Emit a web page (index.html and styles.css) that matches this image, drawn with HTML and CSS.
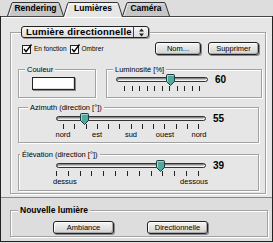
FILE: index.html
```html
<!DOCTYPE html>
<html>
<head>
<meta charset="utf-8">
<link rel="stylesheet" href="styles.css">
</head>
<body>
<div class="tabs">
  <div class="tab tab-rendering">
    <svg class="tab-shape" width="57" height="17" viewBox="0 0 57 17"><path class="tab-fill" d="M0.5 16 L4.8 3.2 Q5.1 2.5 6 2.5 L51 2.5 Q51.9 2.5 52.2 3.2 L56.5 16"/><path class="tab-hi" d="M2 16 L6 4 L51 4"/></svg>
    <span class="tab-label">Rendering</span>
  </div>
  <div class="tab tab-lumieres active">
    <svg class="tab-shape" width="60" height="17" viewBox="0 0 60 17"><path class="tab-fill" d="M0.5 17 L4.8 3.2 Q5.1 2.5 6 2.5 L54 2.5 Q54.9 2.5 55.2 3.2 L59.5 17"/><path class="tab-hi" d="M2 17 L6 4 L54 4"/></svg>
    <span class="tab-label">Lumières</span>
  </div>
  <div class="tab tab-camera">
    <svg class="tab-shape" width="48" height="17" viewBox="0 0 48 17"><path class="tab-fill" d="M0.5 16 L4.8 3.2 Q5.1 2.5 6 2.5 L42 2.5 Q42.9 2.5 43.2 3.2 L47.5 16"/><path class="tab-hi" d="M2 16 L6 4 L42 4"/></svg>
    <span class="tab-label">Caméra</span>
  </div>
</div>

<div class="frame">
  <div class="panel">
    <fieldset class="group group-main">
      <legend class="popup">
        <span class="popup-label">Lumière directionnelle</span>
        <span class="popup-arrow"><svg width="5" height="9" viewBox="0 0 5 9"><path d="M0 3.5 L2.5 0.5 L5 3.5 Z M0 5.5 L2.5 8.5 L5 5.5 Z"/></svg></span>
      </legend>

      <div class="row-top">
        <label class="check check-1"><svg class="check-box" width="12" height="10" viewBox="0 0 12 10"><rect x="0.5" y="1.5" width="8" height="8"/><path d="M2 5 L4 7.6 L9.5 0.5"/></svg><span>En fonction</span></label>
        <label class="check check-2"><svg class="check-box" width="12" height="10" viewBox="0 0 12 10"><rect x="0.5" y="1.5" width="8" height="8"/><path d="M2 5 L4 7.6 L9.5 0.5"/></svg><span>Ombrer</span></label>
        <button class="btn btn-nom">Nom...</button>
        <button class="btn btn-supprimer">Supprimer</button>
      </div>

      <div class="row-mid">
        <fieldset class="group group-couleur">
          <legend class="small-legend">Couleur</legend>
          <div class="swatch"></div>
        </fieldset>
        <fieldset class="group group-lum">
          <legend class="small-legend">Luminosité [%]</legend>
          <div class="slider slider-lum">
            <div class="track-row">
              <div class="track"><svg class="thumb" style="left:48px" width="11" height="12" viewBox="0 0 11 12"><path d="M1.5 1.5 Q1.5 0.5 2.5 0.5 L8.5 0.5 Q9.5 0.5 9.5 1.5 L9.5 7.5 L5.5 11.5 L1.5 7.5 Z"/><path class="thumb-hi" d="M2.5 7.5 L2.5 1.5 L8.5 1.5"/></svg></div>
              <span class="value">60</span>
            </div>
            <div class="ticks ticks-lum"><i></i><i></i><i></i><i></i><i></i><i></i><i></i><i></i><i></i><i></i><i></i></div>
          </div>
        </fieldset>
      </div>

      <fieldset class="group group-az">
        <legend class="small-legend">Azimuth (direction [°])</legend>
        <div class="slider slider-wide">
          <div class="track-row">
            <div class="track"><svg class="thumb" style="left:22px" width="11" height="12" viewBox="0 0 11 12"><path d="M1.5 1.5 Q1.5 0.5 2.5 0.5 L8.5 0.5 Q9.5 0.5 9.5 1.5 L9.5 7.5 L5.5 11.5 L1.5 7.5 Z"/><path class="thumb-hi" d="M2.5 7.5 L2.5 1.5 L8.5 1.5"/></svg></div>
            <span class="value">55</span>
          </div>
          <div class="ticks ticks-az"><i></i><i></i><i></i><i></i><i></i><i></i><i></i><i></i><i></i><i></i><i></i><i></i><i></i></div>
          <div class="tick-labels labels-az"><span>nord</span><span>est</span><span>sud</span><span>ouest</span><span>nord</span></div>
        </div>
      </fieldset>

      <fieldset class="group group-el">
        <legend class="small-legend">Élévation (direction [°])</legend>
        <div class="slider slider-wide">
          <div class="track-row">
            <div class="track"><svg class="thumb" style="left:98px" width="11" height="12" viewBox="0 0 11 12"><path d="M1.5 1.5 Q1.5 0.5 2.5 0.5 L8.5 0.5 Q9.5 0.5 9.5 1.5 L9.5 7.5 L5.5 11.5 L1.5 7.5 Z"/><path class="thumb-hi" d="M2.5 7.5 L2.5 1.5 L8.5 1.5"/></svg></div>
            <span class="value">39</span>
          </div>
          <div class="ticks ticks-el"><i></i><i></i><i></i><i></i><i></i><i></i><i></i><i></i><i></i><i></i><i></i><i></i><i></i></div>
          <div class="tick-labels labels-el"><span>dessus</span><span>dessous</span></div>
        </div>
      </fieldset>
    </fieldset>
  </div>

  <div class="lower">
    <fieldset class="group group-new">
      <legend class="bold-legend">Nouvelle lumière</legend>
      <div class="row-new">
        <button class="btn btn-wide">Ambiance</button>
        <button class="btn btn-wide">Directionnelle</button>
      </div>
    </fieldset>
  </div>
</div>
</body>
</html>
```

FILE: styles.css
```css
* { box-sizing: border-box; }
html, body { margin: 0; padding: 0; }
body {
  width: 273px;
  height: 243px;
  overflow: hidden;
  background: #dddddd;
  font-family: "Liberation Sans", Arial, sans-serif;
  color: #000;
}

/* ---------- tabs ---------- */
.tabs {
  display: flex;
  height: 17px;
  margin-bottom: -1px;
  padding-left: 7px;
  position: relative;
  z-index: 1;
}
.tab {
  position: relative;
  z-index: 0;
  height: 17px;
  margin-right: -1px;
  display: flex;
  justify-content: center;
  padding-top: 4px;
  font-weight: bold;
  font-size: 8.5px;
  line-height: 9px;
}
.tab.active { z-index: 2; }
.tab-rendering { width: 57px; }
.tab-lumieres { width: 60px; }
.tab-camera { width: 48px; }
.tab-shape { position: absolute; left: 0; top: 0; z-index: -1; }
.tab-fill { fill: #c6c6c6; stroke: #333; stroke-width: 1; }
.tab-hi { fill: none; stroke: #e6e6e6; stroke-width: 1; }
.active .tab-fill { fill: #e6e6e6; }
.active .tab-hi { stroke: #fff; }

/* ---------- frame & panel ---------- */
.frame {
  height: 226px;
  border: 1px solid #222;
  border-top: none;
}
.panel {
  height: 182px;
  border-top: 1px solid #444;
  border-bottom: 1px solid #888;
  background: #e6e6e6;
  padding: 9px 0 0 9px;
  box-shadow: inset 0 1px 0 #fff;
}

/* ---------- group boxes ---------- */
.group {
  margin: 0;
  padding: 0;
  min-width: 0;
  border: 1px solid #a2a2a2;
  box-shadow: inset 1px 1px 0 #fff, 1px 1px 0 #fff;
}
.small-legend {
  padding: 0 2px;
  font-size: 7.5px;
  line-height: 9px;
  background: #e6e6e6;
}
.group-main { width: 256px; height: 168px; }

/* popup */
.popup {
  margin-left: 10px;
  padding: 0;
  width: 128px;
  height: 12px;
  display: flex;
  border: 1px solid #222;
  border-radius: 3px;
  background: linear-gradient(#f6f6f6, #dcdcdc);
  box-shadow: 1px 1px 0 #9a9a9a;
}
.popup-label {
  flex: 1;
  padding-left: 4px;
  font-weight: bold;
  font-size: 9.5px;
  letter-spacing: 0.2px;
  line-height: 10px;
  white-space: nowrap;
  overflow: hidden;
}
.popup-arrow {
  width: 15px;
  flex: none;
  border-left: 1px solid #444;
  display: flex;
  align-items: center;
  justify-content: center;
}
.popup-arrow svg { fill: #222; }

/* top row */
.row-top {
  margin-top: 4px;
  height: 13px;
  display: flex;
  align-items: center;
}
.check {
  display: flex;
  align-items: center;
  font-size: 6.5px;
  line-height: 8px;
}
.check-1 { margin-left: 11px; }
.check-2 { margin-left: 3px; }
.check-box { margin-right: 0; overflow: visible; }
.check-box rect { fill: #fff; stroke: #222; }
.check-box path { fill: none; stroke: #000; stroke-width: 1.4; }

.btn {
  height: 13px;
  padding: 0;
  border: 1px solid #222;
  border-radius: 3px;
  background: linear-gradient(#f4f4f4, #d2d2d2);
  box-shadow: inset 1px 1px 0 #fff, inset -1px -1px 0 #a8a8a8, 1px 1px 0 #8a8a8a;
  font-family: "Liberation Sans", Arial, sans-serif;
  font-size: 7.5px;
  line-height: 11px;
  color: #000;
}
.btn-nom { margin-left: auto; width: 46px; }
.btn-supprimer { margin-left: 7px; width: 51px; margin-right: 6px; }

/* middle row */
.row-mid {
  margin-top: 10px;
  display: flex;
}
.group-couleur { margin-left: 7px; width: 78px; height: 33px; }
.group-couleur .small-legend { margin-left: 6px; }
.swatch {
  margin: 3px 0 0 13px;
  width: 43px;
  height: 13px;
  background: #fff;
  border: 1px solid #222;
  box-shadow: 1px 1px 0 #888, inset -1px -1px 0 #ddd;
}
.group-lum { margin-left: 10px; width: 156px; height: 33px; }
.group-lum .small-legend { margin-left: 6px; }

/* sliders */
.slider { display: flex; flex-direction: column; }
.slider-lum { margin-left: 9px; }
.slider-wide { margin-left: 37px; margin-top: 1px; }
.track-row {
  height: 11px;
  display: flex;
  align-items: center;
}
.track {
  position: relative;
  height: 5px;
  border: 1px solid #333;
  border-radius: 3px;
  background: #c4c4c4;
  box-shadow: inset 1px 1px 0 #888, inset -1px -1px 0 #f2f2f2;
}
.slider-lum .track { width: 92px; }
.slider-wide .track { width: 150px; }
.thumb { position: absolute; top: -4px; }
.thumb path { fill: #4fa99d; stroke: #1f3c39; stroke-width: 1; }
.thumb .thumb-hi { fill: none; stroke: #9fd8cf; }
.value {
  margin-left: 7px;
  font-weight: bold;
  font-size: 10px;
  line-height: 11px;
}
.ticks {
  display: flex;
  justify-content: space-between;
  height: 5px;
}
.ticks i { width: 1px; height: 5px; background: #222; }
.ticks-lum { margin-left: 8px; width: 76px; margin-top: 1px; }
.ticks-az { margin-left: 7px; width: 136px; }
.ticks-el { margin-left: 0; width: 143px; }
.tick-labels {
  display: flex;
  font-size: 7.5px;
  line-height: 9px;
  margin-top: 1px;
}
.labels-az { margin-left: -10px; }
.labels-az span { width: 34px; text-align: center; }
.labels-el { margin-left: -3px; width: 155px; justify-content: space-between; }

.group-az { margin: 5px 0 0 7px; width: 241px; height: 40px; }
.group-az .small-legend { margin-left: 9px; }
.group-el { margin: 7px 0 0 7px; width: 241px; height: 41px; }
.group-el .small-legend { margin-left: 1px; }

/* lower area */
.lower { padding: 7px 0 0 9px; }
.group-new { width: 258px; height: 32px; }
.bold-legend {
  margin-left: 7px;
  padding: 0 2px;
  font-weight: bold;
  font-size: 8.5px;
  line-height: 10px;
  background: #dddddd;
}
.row-new {
  margin-top: 6px;
  display: flex;
}
.btn-wide { width: 61px; }
.btn-wide:first-child { margin-left: 42px; }
.btn-wide + .btn-wide { margin-left: 33px; }
```
